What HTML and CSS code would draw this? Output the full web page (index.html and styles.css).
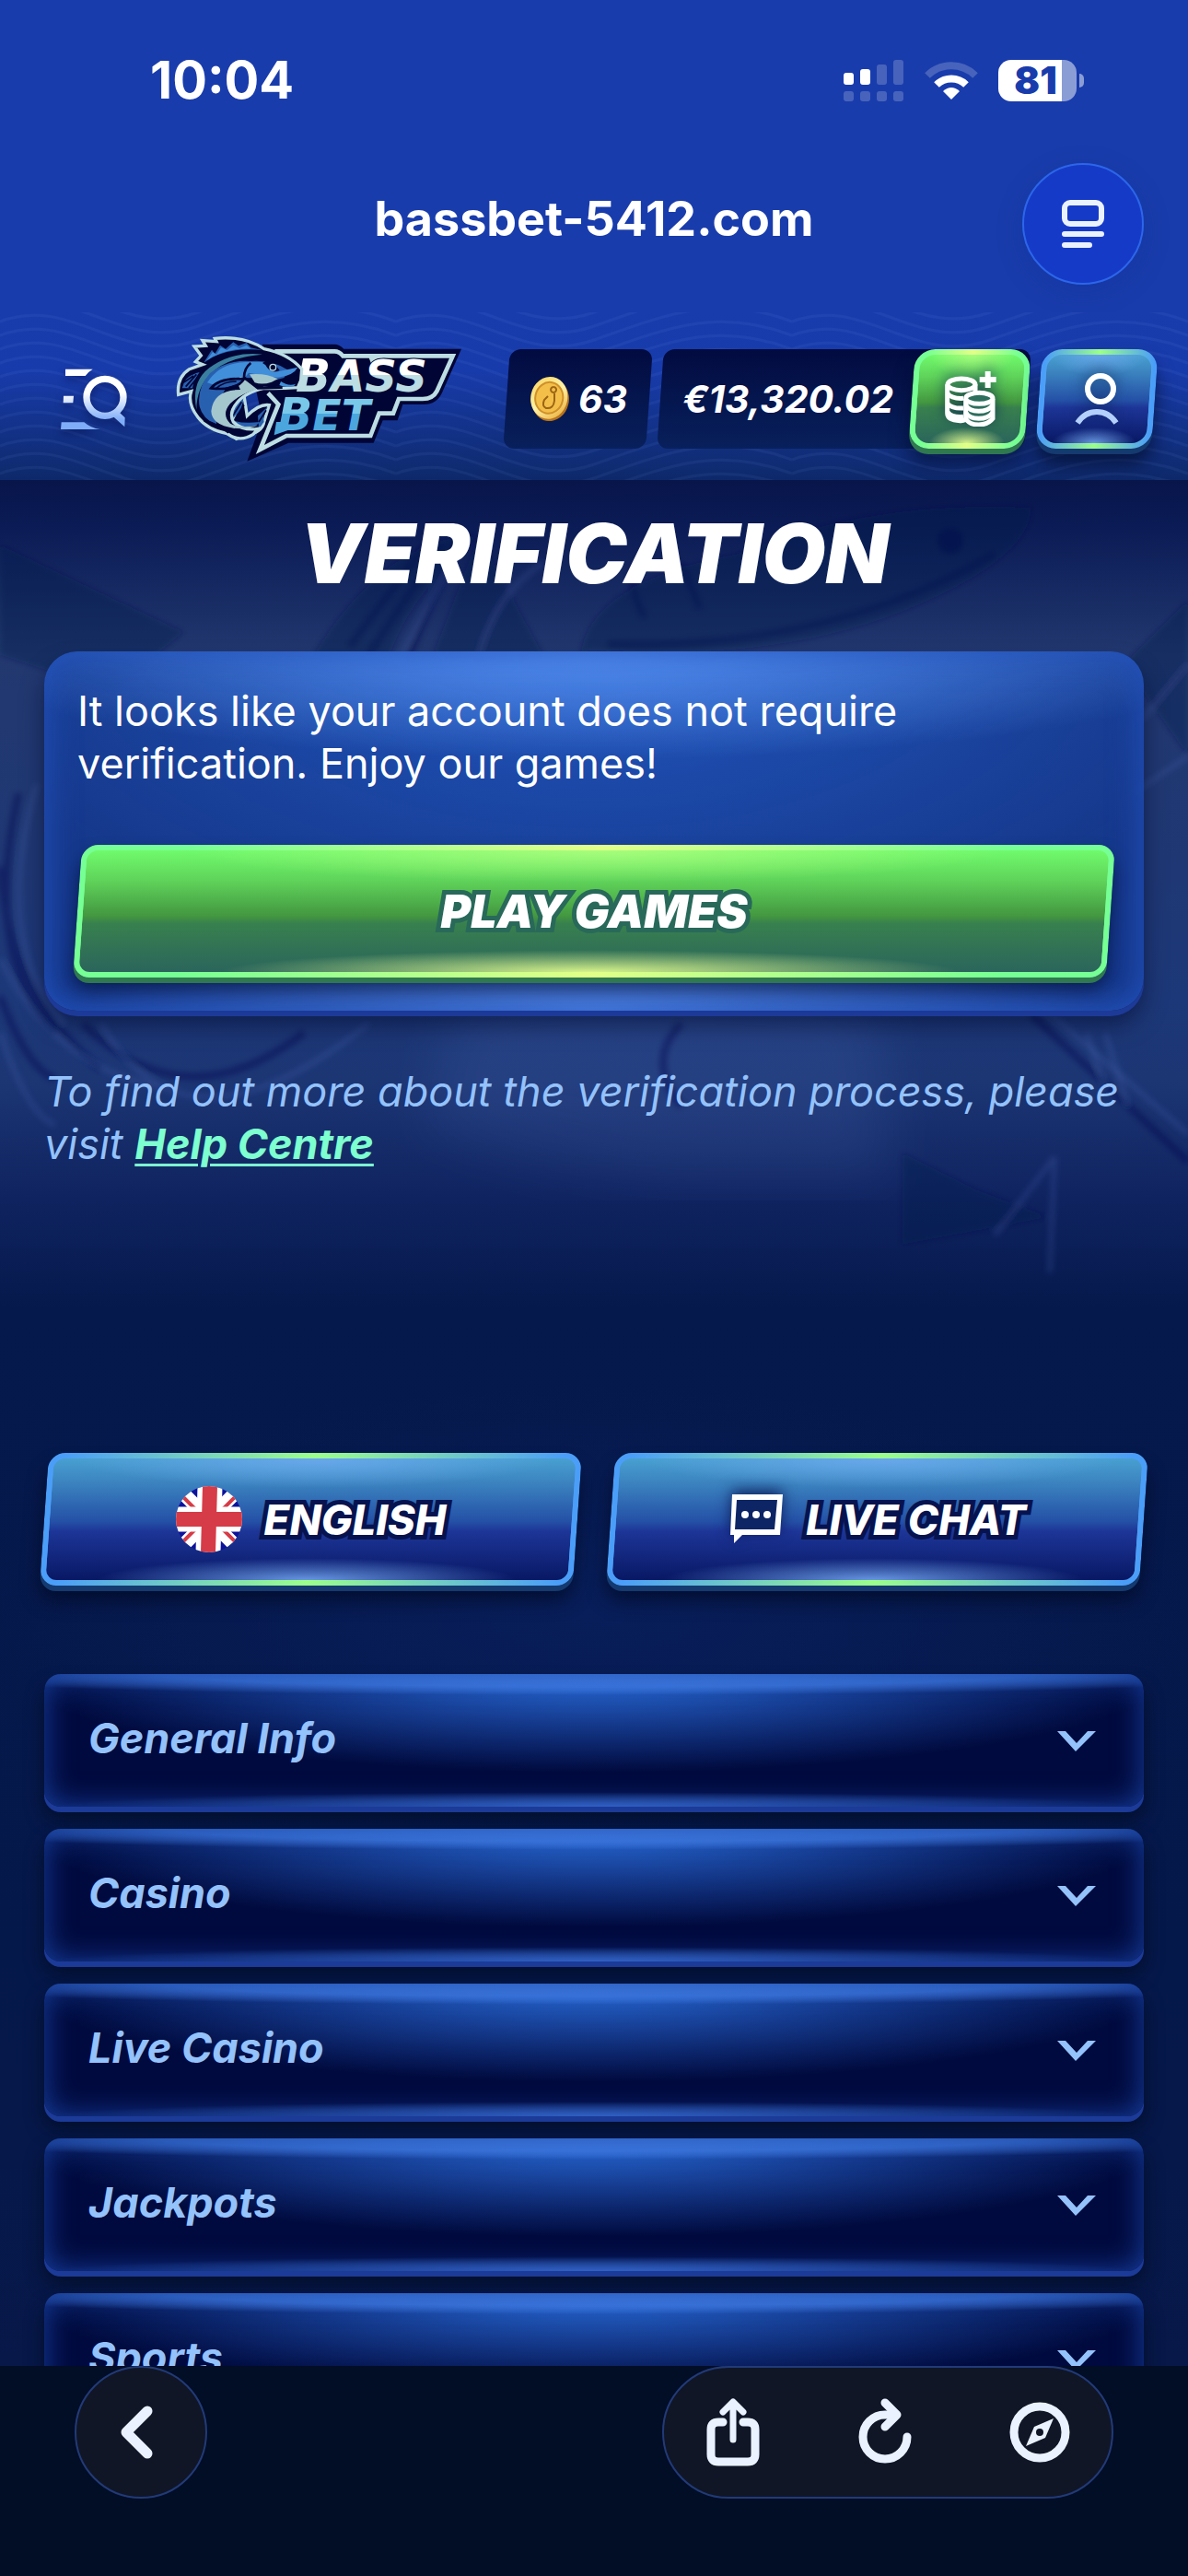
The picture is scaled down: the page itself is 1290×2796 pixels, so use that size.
FILE: index.html
```
<!DOCTYPE html>
<html lang="en">
<head>
<meta charset="utf-8">
<meta name="viewport" content="width=device-width, initial-scale=1">
<title>Verification - BassBet</title>
<link rel="stylesheet" href="styles.css">
</head>
<body>

<div class="chrome">
  <div class="status">
    <span class="time">10:04</span>
    <div class="status-icons">
      <svg width="66" height="46" viewBox="0 0 66 46" fill="#fff">
        <rect x="0" y="14" width="11" height="13" rx="3"/>
        <rect x="18" y="10" width="11" height="17" rx="3"/>
        <g opacity=".2">
          <rect x="36" y="5" width="11" height="22" rx="3"/>
          <rect x="54" y="0" width="11" height="27" rx="3"/>
          <rect x="0" y="34" width="11" height="11" rx="3"/>
          <rect x="18" y="34" width="11" height="11" rx="3"/>
          <rect x="36" y="34" width="11" height="11" rx="3"/>
          <rect x="54" y="34" width="11" height="11" rx="3"/>
        </g>
      </svg>
      <svg width="58" height="44" viewBox="0 0 58 44" fill="none" stroke="#fff">
        <path d="M3 16A37 37 0 0 1 55 16" stroke-width="8" opacity=".2"/>
        <path d="M13 26A23 23 0 0 1 45 26" stroke-width="8"/>
        <path d="M20 33Q29 25 38 33L29 42Z" fill="#fff" stroke="none"/>
      </svg>
      <div class="battery"><span>81</span></div>
    </div>
  </div>
  <div class="urlbar">
    <span class="url">bassbet-5412.com</span>
    <button class="reader" aria-label="Page menu">
      <svg width="48" height="54" viewBox="0 0 48 54" fill="none" stroke="#eaf2ff" stroke-width="6" stroke-linecap="round">
        <rect x="4" y="4" width="40" height="23" rx="6"/>
        <path d="M4 38H44M4 50H31"/>
      </svg>
    </button>
  </div>
</div>

<header class="header">
  <svg class="waves" aria-hidden="true">
    <defs>
      <pattern id="wave" width="430" height="105" patternUnits="userSpaceOnUse">
        <g fill="none" stroke="#7fb0ff" stroke-opacity=".07" stroke-width="3">
          <path d="M0 -20C80 -50 130 30 215 0S350 -50 430 -20"/>
          <path d="M0 -5C80 -35 130 45 215 15S350 -35 430 -5"/>
          <path d="M0 10C80 -20 130 60 215 30S350 -20 430 10"/>
          <path d="M0 25C80 -5 130 75 215 45S350 -5 430 25"/>
          <path d="M0 40C80 10 130 90 215 60S350 10 430 40"/>
          <path d="M0 55C80 25 130 105 215 75S350 25 430 55"/>
          <path d="M0 70C80 40 130 120 215 90S350 40 430 70"/>
          <path d="M0 85C80 55 130 135 215 105S350 55 430 85"/>
          <path d="M0 100C80 70 130 150 215 120S350 70 430 100"/>
          <path d="M0 115C80 85 130 165 215 135S350 85 430 115"/>
        </g>
      </pattern>
    </defs>
    <rect width="100%" height="100%" fill="url(#wave)"/>
  </svg>

  <button class="menu" aria-label="Menu and search">
    <svg width="72" height="66" viewBox="0 0 216 198">
      <defs>
        <linearGradient id="menuFill" x1="0" y1="0" x2="0" y2="198" gradientUnits="userSpaceOnUse">
          <stop offset=".4" stop-color="#fff"/>
          <stop offset=".85" stop-color="#7fadf8"/>
        </linearGradient>
      </defs>
      <g fill="url(#menuFill)">
        <path d="M15 2H104Q90 10 80 24H15ZM9 89H42L40 112H8ZM2 175H76Q98 194 128 198H0Z"/>
        <path d="M166 152L190 136L192 144L209 160L208 190Z"/>
      </g>
      <circle cx="144" cy="94" r="60" fill="none" stroke="url(#menuFill)" stroke-width="22"/>
    </svg>
  </button>

  <a class="logo" href="#" aria-label="BassBet">
    <svg width="320" height="150" viewBox="0 0 960 450">
      <defs>
        <linearGradient id="bass" x1="0" y1="92" x2="0" y2="200" gradientUnits="userSpaceOnUse">
          <stop offset=".5" stop-color="#fff"/><stop offset=".5" stop-color="#bcdde3"/>
        </linearGradient>
        <linearGradient id="bet" x1="0" y1="220" x2="0" y2="330" gradientUnits="userSpaceOnUse">
          <stop offset=".48" stop-color="#79c8ea"/><stop offset=".48" stop-color="#4ba6de"/>
        </linearGradient>
      </defs>
      <!-- plate -->
      <path fill="#010535" d="M300 47H535Q550 47 565 62H948L885 205Q868 243 825 243H757L740 295H692L662 368H385L250 428L300 290L280 200Z"/>
      <path fill="none" stroke="#bcdde3" stroke-width="14" d="M340 70H535Q550 70 562 85H920L868 200Q855 225 822 225H744L726 272H680L652 345H378L292 390L352 243L318 206"/>
      <path fill="#bcdde3" d="M645 86H720Q668 90 660 125Z"/>
      <!-- tail -->
      <path fill="#010535" stroke="#bcdde3" stroke-width="10" d="M240 215L250 280Q290 240 322 245L305 300Q300 335 240 345L215 355L180 335Z"/>
      <path fill="#2860b0" d="M185 275L238 215Q240 260 200 290ZM285 280L318 250Q300 275 305 300L288 322ZM170 280Q220 310 290 300L280 312Q200 325 170 300Z"/>
      <path fill="none" stroke="#010535" stroke-width="5" d="M200 285L232 235M215 290L240 245M288 300L312 262"/>
      <!-- lettering -->
      <g class="logo-text">
        <text x="408" y="200" font-size="150" fill="url(#bass)">B<tspan font-size="144">ASS</tspan></text>
        <text x="350" y="326" font-size="148" fill="url(#bet)">B<tspan font-size="138">ET</tspan></text>
      </g>
      <path fill="#4ba6de" d="M345 300L375 300L385 326L338 343Z"/>
      <!-- body -->
      <path fill="#010535" stroke="#bcdde3" stroke-width="10" stroke-linejoin="miter" d="M26 211Q20 155 62 128L105 113L82 104L100 84L78 54L115 52L105 35L150 38L145 28Q240 18 305 62Q385 78 428 128L425 165L415 188Q350 192 305 190Q240 205 215 240Q190 270 205 300Q235 330 285 322L270 340Q225 368 185 338Q120 325 90 285Q55 240 68 200Z"/>
      <path fill="#2860b0" d="M42 180Q48 150 95 138Q75 165 72 190L38 190ZM110 105L135 65L145 78L162 50L180 62L205 40L222 52L248 42L262 58L300 66Q180 55 112 105Z"/>
      <path fill="#418fda" d="M118 100L138 72L150 80L165 58L185 66L205 50L225 60L248 50L262 62Q180 58 118 100Z"/>
      <path fill="#3a7f9f" d="M85 260Q65 160 140 115Q210 70 300 80Q180 90 130 145Q85 190 85 260Z"/>
      <path fill="#2860b0" d="M95 250Q85 190 130 140Q190 95 265 102Q335 98 385 132L365 165Q290 150 215 160Q150 200 150 310Q105 290 95 250Z"/>
      <path fill="#418fda" d="M120 172Q160 108 245 105L310 105Q320 145 355 135L415 122Q400 150 350 155L305 150L255 140L235 165Q180 150 150 182Z"/>
      <path fill="#a4c6cd" d="M228 152L285 192Q225 210 195 240Q165 275 195 305Q220 320 285 312Q250 325 205 320Q135 310 133 265Q140 195 228 195L215 165Z"/>
      <path fill="#a4c6cd" d="M258 145Q310 140 350 160L330 170Q300 180 275 172Z"/>
      <path fill="none" stroke="#010535" stroke-width="8" d="M262 108Q240 125 240 155L285 190L365 188M110 295Q170 315 190 335M350 165Q385 160 412 140"/>
      <path fill="#2860b0" stroke="#010535" stroke-width="8" d="M132 190Q160 155 240 160Q215 200 132 190Z"/>
      <path fill="none" stroke="#010535" stroke-width="5" d="M150 190Q175 168 215 168M175 193L220 178M50 185L85 145M42 172L75 150M60 190L88 155"/>
      <path fill="#418fda" d="M360 168Q385 185 408 176L402 184Q375 190 355 180Z"/>
      <path fill="#010535" d="M300 108Q320 88 370 108L340 112L356 132Q325 145 310 115Z"/>
      <circle cx="334" cy="122" r="10" fill="none" stroke="#bcdde3" stroke-width="4"/>
    </svg>
  </a>

  <div class="account">
    <div class="chip">
      <svg width="46" height="50" viewBox="0 0 46 50">
        <defs>
          <linearGradient id="coin" x1="0" y1="0" x2="1" y2="1">
            <stop offset="0" stop-color="#f9d257"/><stop offset=".5" stop-color="#fff2a8"/><stop offset="1" stop-color="#e9a62b"/>
          </linearGradient>
        </defs>
        <g transform="rotate(12 23 25)">
          <ellipse cx="24" cy="26" rx="20" ry="23" fill="#b8731c"/>
          <ellipse cx="22" cy="24" rx="20" ry="23" fill="url(#coin)"/>
          <ellipse cx="22" cy="24" rx="15" ry="17" fill="#f3bf48" stroke="#d0902a" stroke-width="2"/>
        </g>
        <path d="M27 12a3 3 0 1 0 .1 0M28 17V27Q27 36 19 35Q14 33 17 26L21 22" fill="none" stroke="#9b6417" stroke-width="2"/>
      </svg>
      <span>63</span>
    </div>
    <div class="chip balance">
      <span>€13,320.02</span>
      <button class="btn btn-green btn-square" aria-label="Deposit">
        <svg width="58" height="60" viewBox="0 0 174 180" fill="none" stroke="#fff" stroke-width="15">
          <g transform="translate(0 18)">
            <path d="M14 25V118Q14 142 55 143Q65 144 72 140M105 25V55"/>
            <ellipse cx="60" cy="25" rx="45" ry="19"/>
            <path d="M14 54Q28 72 66 70M14 86Q28 104 66 102M14 114Q30 134 66 130"/>
            <path fill="#2d6e5c" d="M74 72V136Q85 156 116 156T162 136V72"/>
            <path d="M74 92Q85 112 116 112T162 92M74 116Q85 136 116 136T162 116"/>
            <ellipse cx="118" cy="70" rx="44" ry="18" fill="#2d6e5c"/>
          </g>
          <path d="M146 0V54M119 27H173" stroke-width="18"/>
        </svg>
      </button>
    </div>
    <button class="btn btn-blue btn-square" aria-label="Profile">
      <svg width="50" height="56" viewBox="0 0 50 56" fill="none" stroke-width="6">
        <circle cx="29" cy="17" r="14" stroke="#fff"/>
        <path d="M4 54Q12 42 25 42T46 54" stroke="#b3cffb"/>
      </svg>
    </button>
  </div>
</header>

<main class="page">
  <svg class="scene" viewBox="0 0 1290 900" preserveAspectRatio="xMidYMin slice" aria-hidden="true">
    <defs>
      <filter id="soft"><feGaussianBlur stdDeviation="3"/></filter>
      <filter id="mist"><feGaussianBlur stdDeviation="30"/></filter>
    </defs>
    <path filter="url(#mist)" d="M500 560Q680 520 950 560L970 760H760Q640 760 460 700Z" fill="#5f7fd0" opacity=".14"/>
    <g filter="url(#soft)">
      <g fill="#06134c" opacity=".35">
        <path d="M0 70L200 165L120 230L0 190Z"/>
        <path d="M340 190Q420 60 520 60Q440 130 420 200ZM520 60L590 190H470Z"/>
        <path d="M630 190Q640 110 800 80Q950 20 1120 30Q1120 80 1010 130Q860 200 640 185Z"/>
        <path d="M980 730V830L1140 800L1060 770Z"/>
        <circle cx="1032" cy="70" r="28"/>
        <path d="M1220 200L1290 130V300Z"/>
      </g>
      <circle cx="1032" cy="66" r="14" fill="#03104a" opacity=".6"/>
      <g fill="none" stroke="#03104a" stroke-opacity=".4" stroke-width="8">
        <path d="M660 178Q900 185 1080 80"/>
        <path d="M20 340Q-20 520 60 600M0 420Q10 560 110 640M0 560Q30 640 60 650"/>
        <path d="M90 590Q200 700 330 600M1120 580L1290 740M740 590Q700 630 740 680"/>
        <path d="M380 180L470 60M400 190L480 70M440 200L500 60M700 150Q680 110 690 90M760 140L740 90"/>
      </g>
      <g fill="none" stroke="#5f7fd0" stroke-opacity=".2" stroke-width="5">
        <path d="M40 330Q-10 500 70 590M0 520Q60 640 180 660M110 590Q200 750 400 590M0 600Q30 690 60 700"/>
        <path d="M430 200L500 70M520 190Q540 120 590 90M1130 570L1290 710M1145 735L1080 820M1145 735L1140 860"/>
        <path d="M1240 260L1290 200M1230 340L1290 300M1180 600L1200 660M1200 600L1225 680"/>
      </g>
    </g>
  </svg>

  <h1>Verification</h1>

  <section class="card">
    <p>It looks like your account does not require verification. Enjoy our games!</p>
    <button class="btn btn-green btn-play"><span>Play games</span></button>
  </section>

  <p class="note">To find out more about the verification process, please visit <a href="#">Help Centre</a></p>

  <div class="actions">
    <button class="btn btn-blue">
      <svg width="72" height="72" viewBox="0 0 72 72">
        <defs><clipPath id="round"><circle cx="36" cy="36" r="36"/></clipPath></defs>
        <g clip-path="url(#round)">
          <rect width="72" height="72" fill="#0d129c"/>
          <path d="M0 0L72 72M72 0L0 72" stroke="#fff" stroke-width="15"/>
          <path d="M0 4L32 36M40 36L72 68M72 4L40 36M32 36L0 68" stroke="#d63c47" stroke-width="4"/>
          <path d="M37 0L35 72M0 36H72" stroke="#fff" stroke-width="27"/>
          <path d="M37 0L35 72M0 36H72" stroke="#d63c47" stroke-width="16"/>
        </g>
      </svg>
      <span>English</span>
    </button>
    <button class="btn btn-blue">
      <svg class="glow" width="60" height="54" viewBox="0 0 60 54">
        <path fill="#0d2565" d="M5 3H56V41H5Z"/>
        <path fill="#fff" fill-rule="evenodd" d="M4 0H59L56 44H15L6 53V44H2ZM9 6L7 38H50L53 6Z"/>
        <g fill="#fff"><circle cx="18" cy="22" r="4"/><circle cx="30" cy="22" r="4"/><circle cx="42" cy="22" r="4"/></g>
      </svg>
      <span>Live chat</span>
    </button>
  </div>

  <nav class="sections">
    <button class="section">General Info <svg width="42" height="24" viewBox="0 0 42 24"><path d="M0 1H9L21 14L33 1H42L20 23Z"/></svg></button>
    <button class="section">Casino <svg width="42" height="24" viewBox="0 0 42 24"><path d="M0 1H9L21 14L33 1H42L20 23Z"/></svg></button>
    <button class="section">Live Casino <svg width="42" height="24" viewBox="0 0 42 24"><path d="M0 1H9L21 14L33 1H42L20 23Z"/></svg></button>
    <button class="section">Jackpots <svg width="42" height="24" viewBox="0 0 42 24"><path d="M0 1H9L21 14L33 1H42L20 23Z"/></svg></button>
    <button class="section">Sports <svg width="42" height="24" viewBox="0 0 42 24"><path d="M0 1H9L21 14L33 1H42L20 23Z"/></svg></button>
  </nav>
</main>

<footer class="toolbar">
  <button class="glass back" aria-label="Back">
    <svg width="40" height="58" viewBox="0 0 40 58"><path d="M31 6L8 29L31 52" stroke-width="11"/></svg>
  </button>
  <div class="glass tools">
    <button aria-label="Share">
      <svg width="60" height="76" viewBox="0 0 60 76"><path d="M19 27H14Q6 27 6 35V62Q6 70 14 70H46Q54 70 54 62V35Q54 27 46 27H41" stroke-width="9"/><path d="M30 46V6M19 16L30 5L41 16" stroke-width="7"/></svg>
    </button>
    <button aria-label="Reload">
      <svg width="60" height="76" viewBox="0 0 60 76"><path d="M42 19H30A24 24 0 1 0 54 43" stroke-width="9"/><path d="M30 6L43 19L30 32" stroke-width="9"/></svg>
    </button>
    <button aria-label="Open browser">
      <svg width="66" height="66" viewBox="0 0 66 66"><circle cx="33" cy="33" r="28" stroke-width="9"/><path d="M48 18L39 39L18 48L27 27Z" fill="#eaf2ff" stroke="none"/><circle cx="33" cy="33" r="4" fill="#101626" stroke="none"/></svg>
    </button>
  </div>
</footer>

</body>
</html>
```

FILE: styles.css
```
* {
	box-sizing: border-box;
}

body {
	margin: 0;
	height: 100vh;
	display: flex;
	flex-direction: column;
	overflow: hidden;
	background: #020d26;
	color: #fff;
	font-family: Inter, "Open Sans", sans-serif;
	font-size: 45px;
	line-height: 57px;
}

button {
	padding: 0;
	border: 0;
	background: none;
	color: inherit;
	font: inherit;
	cursor: pointer;
}

svg {
	display: block;
	flex: none;
}

/* browser bars */
.chrome {
	flex: none;
	background: #193cac;
}

.status {
	display: flex;
	justify-content: space-between;
	align-items: center;
	padding: 59px 112px 0 163px;
}

.time {
	font-size: 56px;
	font-weight: 700;
}

.status-icons {
	display: flex;
	align-items: center;
	gap: 22px;
}

.battery {
	position: relative;
	width: 85px;
	height: 45px;
	margin-right: 9px;
	padding-right: 4px;
	border-radius: 14px;
	background: linear-gradient(90deg, #fff 81%, #8b9dd5 81%);
	color: #193cac;
	font-size: 41px;
	font-weight: 900;
	line-height: 45px;
	text-align: center;
}

.battery::after {
	content: "";
	position: absolute;
	right: -8px;
	top: 15px;
	width: 5px;
	height: 15px;
	border-radius: 0 8px 8px 0;
	background: #8b9dd5;
}

.urlbar {
	display: grid;
	grid-template-columns: 1fr auto 1fr;
	align-items: center;
	padding: 61px 48px 30px;
}

.url {
	grid-column: 2;
	padding-bottom: 12px;
	font-size: 52px;
	font-weight: 700;
}

.reader {
	display: flex;
	align-items: center;
	justify-content: center;
	justify-self: end;
	width: 132px;
	height: 132px;
	border: 2px solid #2c66ea;
	border-radius: 50%;
	background: #163ac8;
	box-shadow: 0 8px 30px rgba(10, 40, 130, .2);
}

/* header */
.header {
	position: relative;
	flex: none;
	display: flex;
	align-items: center;
	height: 182px;
	padding: 6px 36px 0 66px;
	background: linear-gradient(#193cac, #183bab 35%, #0e296a);
}

.waves {
	position: absolute;
	inset: 0;
	width: 100%;
	height: 100%;
}

.menu,
.logo,
.account {
	position: relative;
}

.menu svg {
	filter: drop-shadow(0 4px 5px rgba(0, 0, 50, .4));
}

.logo {
	margin-left: 47px;
}

.logo-text {
	font-family: "DejaVu Sans", sans-serif;
	font-weight: 700;
	font-style: italic;
	stroke: #010535;
	stroke-width: 6px;
	paint-order: stroke fill;
}

.account {
	display: flex;
	gap: 12px;
	margin-left: auto;
}

.chip {
	position: relative;
	display: flex;
	align-items: center;
	gap: 8px;
	height: 108px;
	padding: 0 24px;
	font-size: 41px;
	font-weight: 700;
	font-style: italic;
}

.chip::before {
	content: "";
	position: absolute;
	inset: 0;
	border-radius: 12px;
	background: linear-gradient(#020b40, #08205c);
	transform: skewX(-4deg);
}

.chip > * {
	position: relative;
}

.balance {
	gap: 20px;
	padding-right: 0;
}

/* slanted buttons */
.btn {
	position: relative;
	display: flex;
	align-items: center;
	justify-content: center;
	gap: 24px;
	height: 144px;
	font-weight: 800;
	font-style: italic;
	text-transform: uppercase;
}

.btn::before {
	content: "";
	position: absolute;
	inset: 0;
	border: 6px solid transparent;
	border-radius: 18px;
	transform: skewX(-4deg);
}

.btn > * {
	position: relative;
}

.btn span {
	-webkit-text-stroke: 10px #06134f;
	paint-order: stroke fill;
}

.btn-green::before {
	background:
		radial-gradient(ellipse 36% 18% at 50% 100%, #d6f48a, transparent) padding-box,
		radial-gradient(ellipse 40% 26% at 50% 0, rgba(190, 255, 130, .7), transparent) padding-box,
		linear-gradient(#70fa6c, #5fd35a 25%, #439740 54%, #38804e 60%, #2b655c) padding-box,
		linear-gradient(90deg, #76ff94 10%, #e2ff88 50%, #76ff94 90%) border-box;
	box-shadow: 0 6px 0 #2f7850, 0 14px 20px rgba(0, 8, 40, .6);
}

.btn-blue::before {
	background:
		radial-gradient(ellipse 40% 18% at 50% 100%, #6797e2, transparent) padding-box,
		radial-gradient(ellipse 46% 24% at 50% 0, #69a7ec, transparent) padding-box,
		linear-gradient(#48a0d0, #3a80be 22%, #2450a6 52%, #1d3597 60%, #081864) padding-box,
		linear-gradient(90deg, #4b9ef8 3%, #9cff8c 50%, #4b9ef8 97%) border-box;
	box-shadow: 0 6px 0 #143a70, 0 16px 20px rgba(0, 8, 30, .65);
}

.btn-green.btn-play span {
	font-size: 50px;
	font-weight: 900;
	-webkit-text-stroke: 10px #28695a;
}

.btn-square {
	width: 126px;
	height: 108px;
}

.btn-square::before {
	border-radius: 22px;
}

.btn-square svg {
	filter: drop-shadow(0 -4px 8px rgba(6, 30, 80, .7));
}

.glow {
	filter: drop-shadow(0 -4px 8px rgba(3, 12, 70, .8));
}

/* page */
.page {
	position: relative;
	flex: 1;
	min-height: 0;
	overflow: hidden;
	padding: 0 48px;
	background:
		radial-gradient(ellipse 50% 12% at 50% 60%, #081e5a, transparent),
		linear-gradient(#08154b 0, #0b1b55 50px, #22386f 190px, #1d3878 560px, #1c3674 650px, #0f2360 780px, #06194c 900px, #05184a 1600px, #071849 2047px);
}

.scene {
	position: absolute;
	left: 0;
	top: 0;
	width: 100%;
}

h1 {
	position: relative;
	margin: 27px 0 54px;
	font-size: 89px;
	font-weight: 900;
	font-style: italic;
	line-height: 105px;
	text-align: center;
	text-transform: uppercase;
}

.card {
	position: relative;
	padding: 36px;
	border-radius: 36px;
	background:
		radial-gradient(ellipse 60% 30% at 50% 0, rgba(92, 152, 246, .9), transparent),
		radial-gradient(ellipse 60% 85% at 50% 0, rgba(36, 94, 204, .8), transparent),
		radial-gradient(ellipse 50% 26% at 50% 100%, rgba(94, 150, 244, .9), transparent),
		rgba(20, 56, 144, .82);
	box-shadow: inset 0 0 36px #2454c0, 0 6px 0 #1d3a98, 0 16px 24px rgba(0, 8, 40, .5);
}

.card p {
	margin: 0 0 60px;
}

.card .btn {
	width: 100%;
}

.note {
	position: relative;
	margin: 59px 0 307px;
	color: #94c2fb;
	font-style: italic;
}

.note a {
	color: #7dffd0;
	font-weight: 700;
	text-decoration-thickness: 3px;
	text-underline-offset: 5px;
}

.actions {
	display: grid;
	grid-template-columns: 1fr 1fr;
	gap: 36px;
	margin-bottom: 96px;
}

.sections {
	display: grid;
	gap: 24px;
}

.section {
	display: flex;
	align-items: center;
	justify-content: space-between;
	height: 144px;
	padding: 0 52px 6px 48px;
	border-radius: 18px;
	background:
		radial-gradient(ellipse 65% 16% at 50% 0, #4c8af0, rgba(70, 132, 236, .8) 60%, transparent),
		radial-gradient(ellipse 52% 74% at 50% 0, #2a6edc, rgba(32, 84, 184, .65) 50%, transparent),
		radial-gradient(ellipse 50% 11% at 50% 100%, #4880e6, transparent),
		#000a3e;
	box-shadow: inset 0 0 32px #1740a0, 0 6px 0 #1c3a98, 0 14px 20px rgba(0, 10, 30, .7);
	color: #94c2fb;
	font-weight: 700;
	font-style: italic;
}

.section svg {
	margin-top: 8px;
	fill: #94c2fb;
}

/* bottom bar */
.toolbar {
	flex: none;
	display: flex;
	justify-content: space-between;
	align-items: flex-start;
	height: 228px;
	padding: 0 81px;
	background: #020d26;
}

.glass {
	display: flex;
	align-items: center;
	height: 144px;
	border: 2px solid #213a78;
	border-radius: 72px;
	background: #101626;
}

.glass svg {
	fill: none;
	stroke: #eaf2ff;
	stroke-linecap: round;
	stroke-linejoin: round;
}

.back {
	justify-content: center;
	width: 144px;
	padding-right: 8px;
}

.tools {
	gap: 105px;
	padding: 0 45px;
}
```
